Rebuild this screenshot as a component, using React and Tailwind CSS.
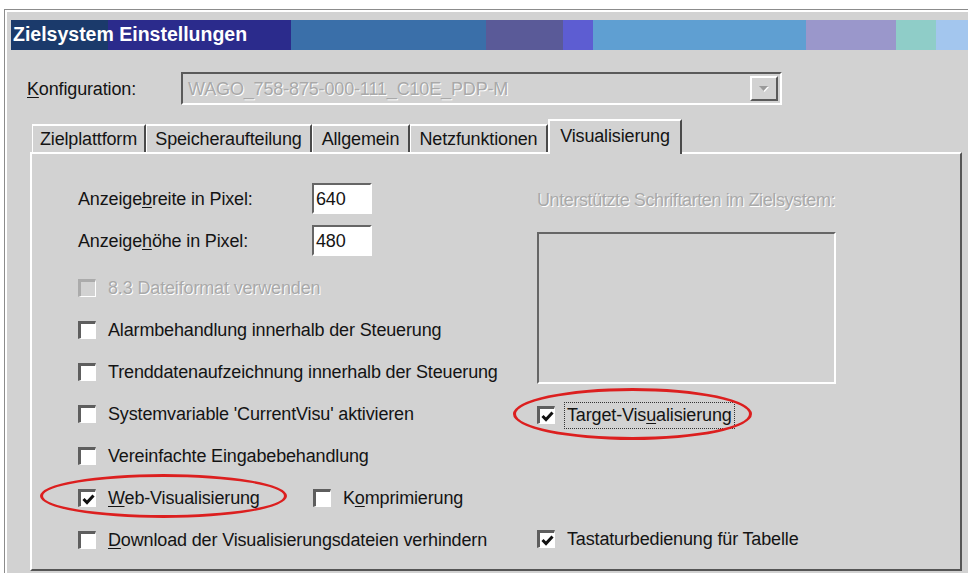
import React from 'react';

// Windows-classic style sunken checkbox
function CheckBox({ checked = false, disabled = false }) {
    return (
        <span
            className={`flex h-[18px] w-[18px] shrink-0 items-center justify-center border-t-[3px] border-l-[3px] border-b border-r border-b-white border-r-white ${
                disabled
                    ? 'border-t-[#ababab] border-l-[#ababab] bg-[#d2d2d2]'
                    : 'border-t-[#5e5e5e] border-l-[#5e5e5e] bg-white'
            }`}
        >
            {checked && (
                <svg width="13" height="13" viewBox="0 0 13 13">
                    <polyline points="1.5,6 5,9.5 11.5,2.5" fill="none" stroke="#111111" strokeWidth="3" />
                </svg>
            )}
        </span>
    );
}

function CheckRow({ checked, disabled, children }) {
    return (
        <div className="flex h-[42px] items-center">
            <CheckBox checked={checked} disabled={disabled} />
            <span
                className={`ml-[12px] whitespace-nowrap ${
                    disabled ? 'text-[#a9a9a9] [text-shadow:1px_1px_0_#ffffff]' : ''
                }`}
            >
                {children}
            </span>
        </div>
    );
}

function NumberField({ label, value }) {
    return (
        <div className="flex h-[31px] items-center">
            <span className="w-[234px] whitespace-nowrap">{label}</span>
            <div className="flex h-[31px] w-[60px] items-center border-2 border-t-[#666666] border-l-[#666666] border-b-white border-r-white bg-white pl-[2px]">
                {value}
            </div>
        </div>
    );
}

const tabs = [
    { name: 'Zielplattform', w: 'w-[114px]' },
    { name: 'Speicheraufteilung', w: 'w-[166px]' },
    { name: 'Allgemein', w: 'w-[98px]' },
    { name: 'Netzfunktionen', w: 'w-[138px]' },
];

export default function App() {
    return (
        <div className="relative h-[573px] w-[968px] overflow-hidden bg-white pl-[4px] pt-[9px] font-['Liberation_Sans',Arial,sans-serif] text-[18px] leading-none tracking-[-0.15px] text-[#141414]">
            <div className="h-[580px] w-[990px] border-l border-t border-[#8c8c8c] bg-[#d2d2d2]">
                <div className="flex h-full flex-col border-l-2 border-t-2 border-white pl-[4px] pt-[8px]">
                    {/* title bar */}
                    <div className="flex h-[30px] items-center pl-[2px] text-[19.5px] font-bold tracking-normal text-white bg-[linear-gradient(90deg,#1b3a6b_0px,#1b3a6b_97px,#2b2b8c_97px,#2b2b8c_280px,#3a6fa9_280px,#3a6fa9_475px,#5a5a98_475px,#5a5a98_552px,#5d5dd2_552px,#5d5dd2_582px,#5f9fd2_582px,#5f9fd2_795px,#9a97cb_795px,#9a97cb_885px,#8fcdc8_885px,#8fcdc8_925px,#a3c6ee_925px,#a3c6ee_1000px)]">
                        Zielsystem Einstellungen
                    </div>

                    {/* Konfiguration */}
                    <div className="mt-[22px] flex items-center pl-[16px]">
                        <span className="w-[154px]">
                            <u className="underline-offset-2">K</u>onfiguration:
                        </span>
                        <div className="flex h-[33px] w-[601px] items-center justify-between border-2 border-t-[#5a5a5a] border-l-[#5a5a5a] border-b-white border-r-white pl-[5px] pr-[2px]">
                            <span className="text-[#a9a9a9] [text-shadow:1px_1px_0_#ffffff]">WAGO_758-875-000-111_C10E_PDP-M</span>
                            <div className="flex h-[25px] w-[28px] items-center justify-center border-2 border-t-white border-l-white border-b-[#5a5a5a] border-r-[#5a5a5a]">
                                <svg width="10" height="6" viewBox="0 0 10 6">
                                    <polygon points="1,1 10,1 5.5,6" fill="#ffffff" />
                                    <polygon points="0,0 9,0 4.5,5" fill="#9a9a9a" />
                                </svg>
                            </div>
                        </div>
                    </div>

                    {/* tabs */}
                    <div className="ml-[19px] mt-[12px] flex h-[35px] items-end pl-[2px]">
                        {tabs.map((t) => (
                            <div
                                key={t.name}
                                className={`flex h-[28px] ${t.w} items-center justify-center border-l border-t-2 border-r-2 border-l-white border-t-white border-r-[#4a4a4a] pb-[1px]`}
                            >
                                {t.name}
                            </div>
                        ))}
                        <div className="relative z-10 -mb-[2px] flex h-[35px] w-[134px] items-center justify-center border-l-2 border-t-2 border-r-2 border-l-white border-t-white border-r-[#4a4a4a] bg-[#d2d2d2] pb-[3px]">
                            Visualisierung
                        </div>
                    </div>

                    {/* tab panel */}
                    <div className="ml-[19px] flex h-[419px] w-[932px] border-2 border-l-white border-t-white border-r-[#555555] border-b-[#555555] pl-[46px] pt-[29px]">
                        <div className="flex w-[459px] flex-col">
                            <NumberField
                                label={<>Anzeige<u className="underline-offset-2">b</u>reite in Pixel:</>}
                                value="640"
                            />
                            <div className="mt-[11px]">
                                <NumberField
                                    label={<>Anzeige<u className="underline-offset-2">h</u>öhe in Pixel:</>}
                                    value="480"
                                />
                            </div>
                            <div className="mt-[11px] flex flex-col">
                                <CheckRow disabled>8.3 Dateiformat verwenden</CheckRow>
                                <CheckRow>Alarmbehandlung innerhalb der Steuerung</CheckRow>
                                <CheckRow>Trenddatenaufzeichnung innerhalb der Steuerung</CheckRow>
                                <CheckRow>Systemvariable 'CurrentVisu' aktivieren</CheckRow>
                                <CheckRow>Vereinfachte Eingabebehandlung</CheckRow>
                                <div className="flex">
                                    <div className="w-[235px]">
                                        <CheckRow checked>
                                            <u className="underline-offset-2">W</u>eb-Visualisierung
                                        </CheckRow>
                                    </div>
                                    <CheckRow>
                                        K<u className="underline-offset-2">o</u>mprimierung
                                    </CheckRow>
                                </div>
                                <CheckRow>
                                    <u className="underline-offset-2">D</u>ownload der Visualisierungsdateien verhindern
                                </CheckRow>
                            </div>
                        </div>

                        <div className="flex flex-col">
                            <div className="mt-[6px] flex h-[22px] items-center whitespace-nowrap tracking-[-0.4px] text-[#a9a9a9] [text-shadow:1px_1px_0_#ffffff]">
                                Unterstützte Schriftarten im Zielsystem:
                            </div>
                            <div className="mt-[21px] h-[152px] w-[299px] border-2 border-t-[#666666] border-l-[#666666] border-b-white border-r-white"></div>
                            <div className="mt-[10px] flex h-[42px] items-center">
                                <CheckBox checked />
                                <span className="ml-[9px] flex h-[27px] items-center border border-dotted border-[#333333] px-[2px] whitespace-nowrap">
                                    Target-Vis<u className="underline-offset-2">u</u>alisierung
                                </span>
                            </div>
                            <div className="mt-[82px]">
                                <CheckRow checked>Tastaturbedienung für Tabelle</CheckRow>
                            </div>
                        </div>
                    </div>
                </div>
            </div>

            {/* red annotation ellipses */}
            <div className="absolute left-[40px] top-[474px] h-[44px] w-[247px] rounded-[50%] border-[3px] border-[#dc1f1f]"></div>
            <div className="absolute left-[513px] top-[388px] h-[52px] w-[239px] rounded-[50%] border-[3px] border-[#dc1f1f]"></div>
        </div>
    );
}
